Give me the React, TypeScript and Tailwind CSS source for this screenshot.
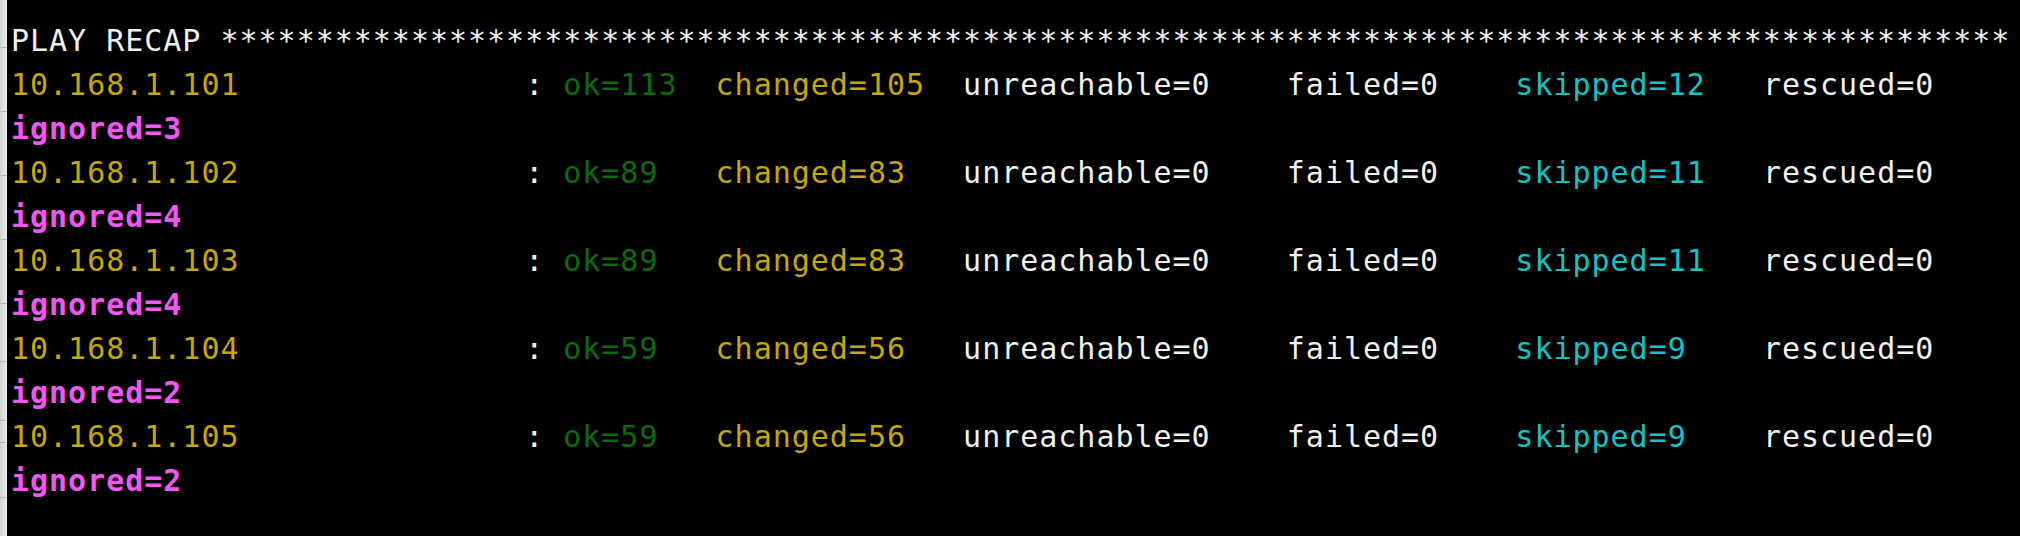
const hosts = [
  { ip: '10.168.1.101', ok: 113, changed: 105, skipped: 12, ignored: 3 },
  { ip: '10.168.1.102', ok: 89, changed: 83, skipped: 11, ignored: 4 },
  { ip: '10.168.1.103', ok: 89, changed: 83, skipped: 11, ignored: 4 },
  { ip: '10.168.1.104', ok: 59, changed: 56, skipped: 9, ignored: 2 },
  { ip: '10.168.1.105', ok: 59, changed: 56, skipped: 9, ignored: 2 },
];

// same as ansible's colorize(): "%s=%-4s"
const stat = (lead: string, n: number) => `${lead}=${String(n).padEnd(4)}`;

// row separators of the window peeking in at the left edge
const stripRows = [48, 64, 64, 64, 64, 58, 59, 22, 55];

const COLUMNS = 105;

export default function App() {
  const banner = 'PLAY RECAP';
  const stars = '*'.repeat(COLUMNS - banner.length - 1);

  return (
    <div className="flex w-[2020px] h-[536px] bg-black overflow-hidden">
      {/* left edge strip */}
      <div className="flex flex-col w-[7px] shrink-0 bg-linear-to-r from-[#d2d2d2] to-[#ededed]">
        {stripRows.map((h, i) => (
          <div key={i} className="border-b border-[#b5b5b5]" style={{ height: h }} />
        ))}
      </div>

      {/* terminal */}
      <div className="flex-1 pl-[4px] pt-[19px] font-['DejaVu_Sans_Mono',monospace] text-[30px] tracking-[0.98px] leading-[44px] text-[#f0f0f0] whitespace-pre">
        <div>
          {banner} {stars}
        </div>
        {hosts.map((h) => (
          <div key={h.ip}>
            <div>
              <span className="text-[#c6a900]">{h.ip.padEnd(26)}</span>
              {' : '}
              <span className="text-[#0a6d0a]">{stat('ok', h.ok)}</span>{' '}
              <span className="text-[#c6a900]">{stat('changed', h.changed)}</span>{' '}
              <span>{stat('unreachable', 0)}</span>{' '}
              <span>{stat('failed', 0)}</span>{' '}
              <span className="text-[#10c4c8]">{stat('skipped', h.skipped)}</span>{' '}
              <span>{stat('rescued', 0)}</span>
            </div>
            <div className="font-bold text-[#f655f6]">{`ignored=${h.ignored}`}</div>
          </div>
        ))}
      </div>
    </div>
  );
}
